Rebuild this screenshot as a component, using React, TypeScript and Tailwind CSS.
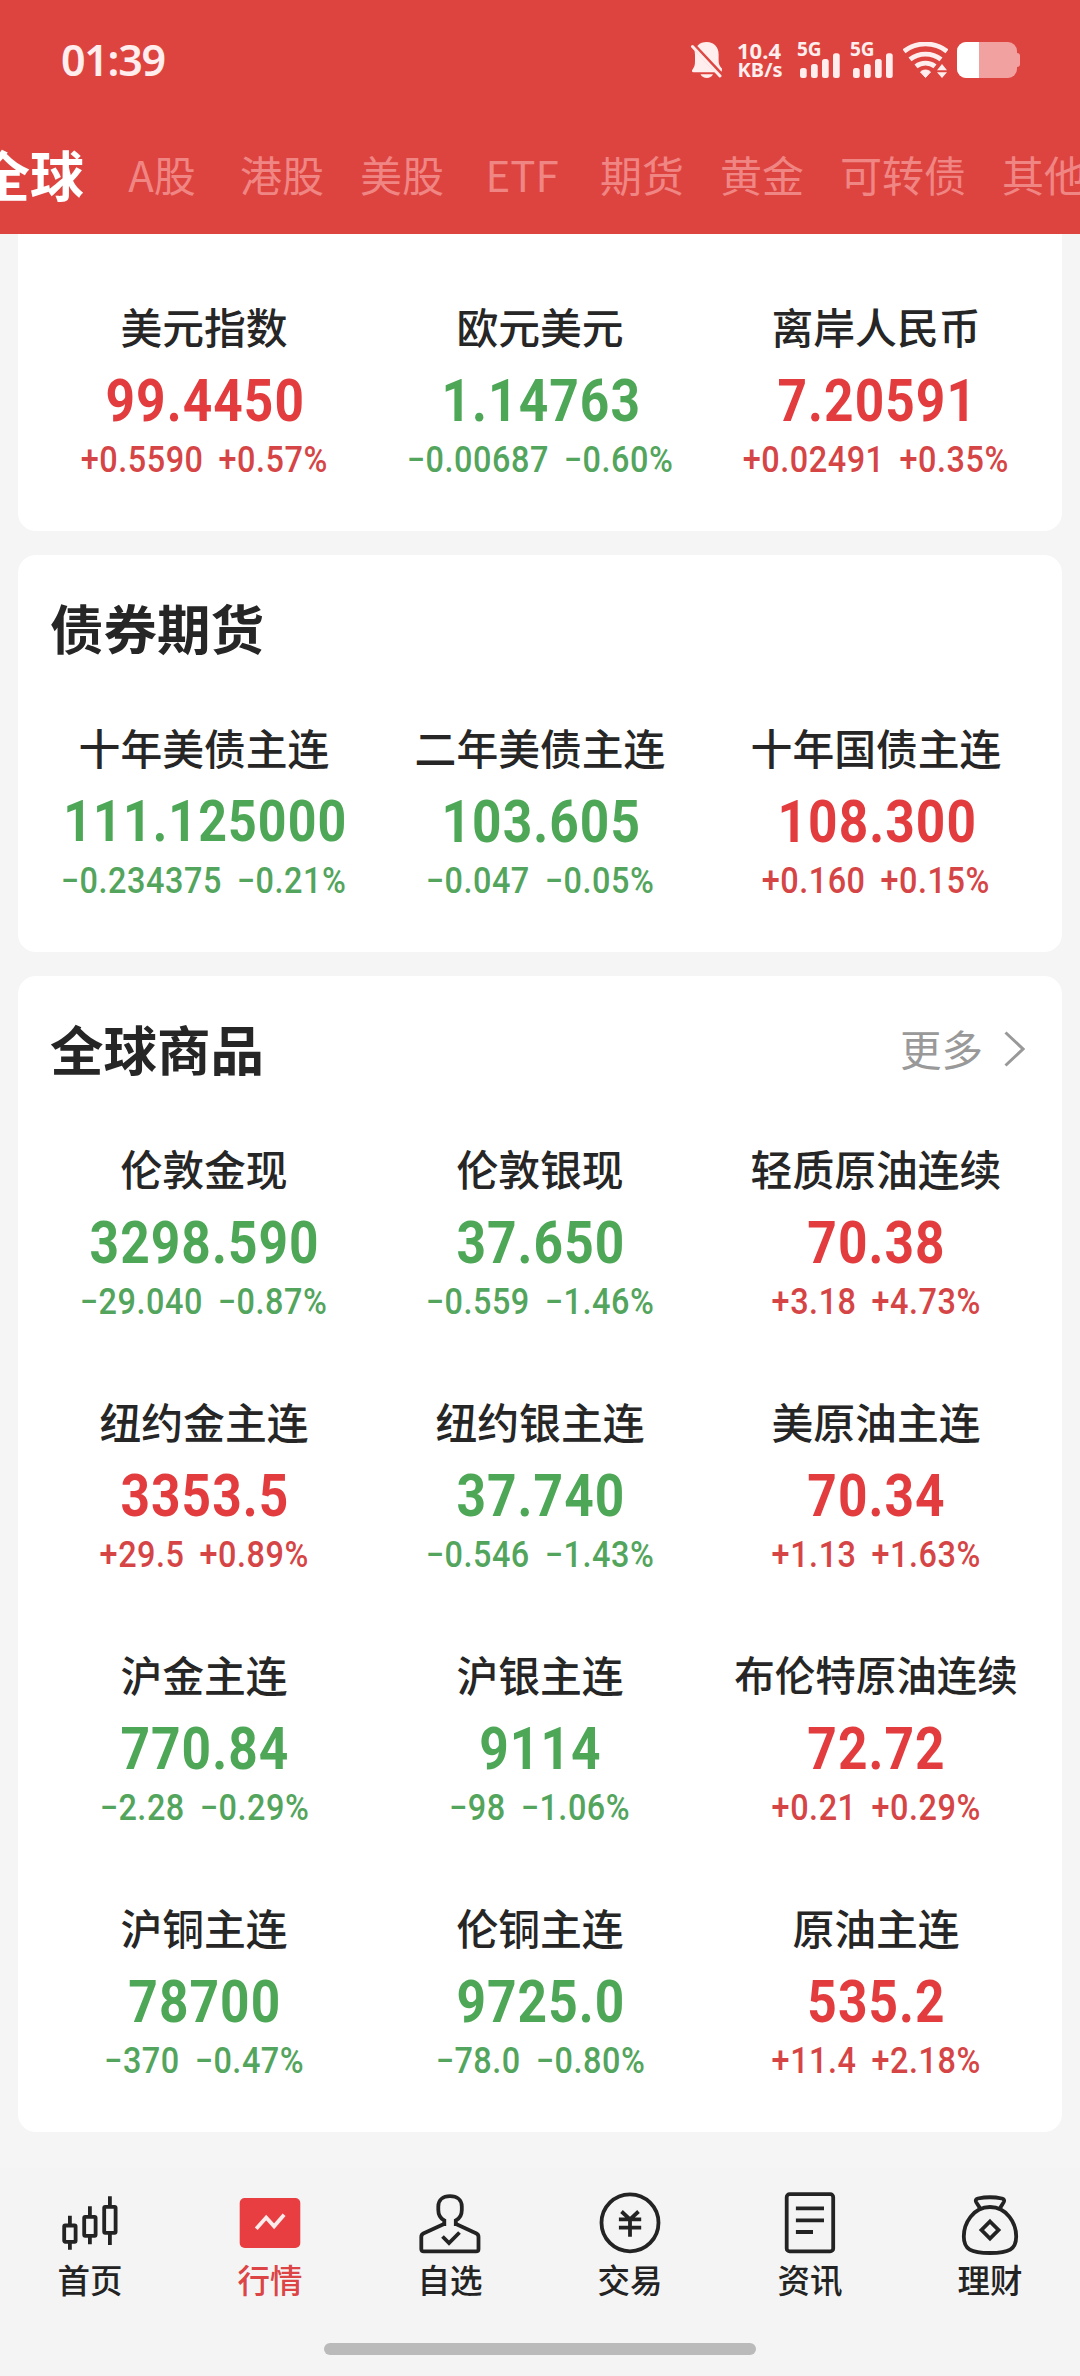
import React from 'react';

interface Quote {
  name: string;
  price: string;
  change: string;
  up?: boolean;
}

const forex: Quote[] = [
  { name: '美元指数', price: '99.4450', change: '+0.5590 +0.57%', up: true },
  { name: '欧元美元', price: '1.14763', change: '−0.00687 −0.60%' },
  { name: '离岸人民币', price: '7.20591', change: '+0.02491 +0.35%', up: true },
];

const bonds: Quote[] = [
  { name: '十年美债主连', price: '111.125000', change: '−0.234375 −0.21%' },
  { name: '二年美债主连', price: '103.605', change: '−0.047 −0.05%' },
  { name: '十年国债主连', price: '108.300', change: '+0.160 +0.15%', up: true },
];

const commodities: Quote[] = [
  { name: '伦敦金现', price: '3298.590', change: '−29.040 −0.87%' },
  { name: '伦敦银现', price: '37.650', change: '−0.559 −1.46%' },
  { name: '轻质原油连续', price: '70.38', change: '+3.18 +4.73%', up: true },
  { name: '纽约金主连', price: '3353.5', change: '+29.5 +0.89%', up: true },
  { name: '纽约银主连', price: '37.740', change: '−0.546 −1.43%' },
  { name: '美原油主连', price: '70.34', change: '+1.13 +1.63%', up: true },
  { name: '沪金主连', price: '770.84', change: '−2.28 −0.29%' },
  { name: '沪银主连', price: '9114', change: '−98 −1.06%' },
  { name: '布伦特原油连续', price: '72.72', change: '+0.21 +0.29%', up: true },
  { name: '沪铜主连', price: '78700', change: '−370 −0.47%' },
  { name: '伦铜主连', price: '9725.0', change: '−78.0 −0.80%' },
  { name: '原油主连', price: '535.2', change: '+11.4 +2.18%', up: true },
];

const tabs = ['A股', '港股', '美股', 'ETF', '期货', '黄金', '可转债', '其他'];

const Signal: React.FC = () => (
  <div className="relative w-11 h-9 ml-[9px] shrink-0">
    <span className="absolute left-0 -top-[3px] text-[19px] leading-[20px] font-bold">5G</span>
    <svg className="w-11 h-9" viewBox="0 0 44 36" fill="currentColor">
      <rect x="3" y="26" width="6.7" height="10" rx="2.5" />
      <rect x="14" y="22" width="6.7" height="14" rx="2.5" />
      <rect x="25" y="17" width="6.7" height="19" rx="2.5" />
      <rect x="36" y="11.3" width="6.7" height="24.7" rx="2.5" />
    </svg>
  </div>
);

const StatusBar: React.FC = () => (
  <div className="flex items-center justify-between h-[120px] pl-[61px] pr-[60px] text-[#ffeeed] font-['Noto_Sans',sans-serif]">
    <span className="text-[43px] leading-[60px] font-semibold tracking-[-1.3px]">01:39</span>
    <div className="flex items-center">
      <svg className="w-8 h-9 shrink-0" viewBox="0 0 32 36" fill="currentColor">
        <path d="M8 3.2C10 1 13 0 16.8 0 24 0 28.6 5 28.6 12v6.5c0 3.5 1 5.5 3.3 8v3H30L6.5 5Z" />
        <path d="M4.6 8.5 25 30.3H3.5c-1.7 0-2-1.6-1-2.8C4.5 25 5 22.5 5 19v-6c0-1.7-.4-3-.4-4.5Z" />
        <path d="M10.5 32.3H23c-1.2 2.5-3.5 3.7-6.2 3.7s-5-1.2-6.3-3.7Z" />
        <path d="M2.5 4.5 30 34" stroke="currentColor" strokeWidth="3" strokeLinecap="round" />
        <path d="M5.5 3.3 32 31.5" stroke="#dd4440" strokeWidth="1.6" />
      </svg>
      <div className="w-[46px] ml-[14px] mr-[6px] flex flex-col items-center font-bold">
        <span className="text-[22px] leading-[20px]">10.4</span>
        <span className="text-[20px] leading-[20px] pl-[2px]">KB/s</span>
      </div>
      <Signal />
      <Signal />
      <svg className="w-[45px] h-9 ml-[9px] shrink-0" viewBox="0 0 45 36" fill="none" stroke="currentColor" strokeWidth="4.8">
        <path d="M1 9.3C13.5-.5 31.500-.5 44 9.300" />
        <path d="M7 17.300c9-7 22-7 31 0" />
        <path d="M13 24.300c5.500-4.300 13.500-4.300 19 0" />
        <path d="M17.5 30c2.5-2.600 7.500-2.600 10 0l-5 5.500Z" fill="currentColor" strokeWidth="1" />
        <path d="M34 28.200 39 22l5 6.200ZM34 30.200h10L39 36Z" fill="currentColor" stroke="none" />
      </svg>
      <div className="flex items-center ml-[9px]">
        <div className="w-[60px] h-9 rounded-[9px] bg-[#f1a2a0] overflow-hidden">
          <div className="w-[22px] h-full bg-white"></div>
        </div>
        <div className="w-[3px] h-[14px] rounded-r-[3px] bg-[#f1a2a0]"></div>
      </div>
    </div>
  </div>
);

const QuoteCell: React.FC<{ quote: Quote }> = ({ quote }) => (
  <div className="h-[253px] pt-[19px] flex flex-col items-center whitespace-nowrap">
    <div
      className={`h-[61px] leading-[58px] font-medium text-[#262626] ${
        quote.name.length > 6 ? 'text-[40.5px]' : 'text-[41.8px]'
      }`}
    >
      {quote.name}
    </div>
    <div
      className={`h-[86px] leading-[86px] pl-[2px] font-['Roboto',sans-serif] font-bold scale-x-[0.88] ${
        quote.price.length > 9 ? 'text-[57px] tracking-[1.2px]' : 'text-[58.5px] tracking-[1.2px]'
      } ${quote.up ? 'text-[#e23c3e]' : 'text-[#4da757]'}`}
    >
      {quote.price}
    </div>
    <div
      className={`font-['Roboto',sans-serif] font-medium text-[36px] leading-8 tracking-[0.6px] [word-spacing:7px] scale-x-[0.9] ${
        quote.up ? 'text-[#d64546]' : 'text-[#53a55d]'
      }`}
    >
      {quote.change}
    </div>
  </div>
);

const QuoteGrid: React.FC<{ quotes: Quote[] }> = ({ quotes }) => (
  <div className="grid grid-cols-[repeat(3,336px)] justify-center">
    {quotes.map((quote) => (
      <QuoteCell key={quote.name} quote={quote} />
    ))}
  </div>
);

const CardHeader: React.FC<{ title: string; more?: boolean }> = ({ title, more }) => (
  <div className="h-[144px] pl-8 pr-[37px] flex items-center justify-between">
    <h2 className="text-[53.5px] leading-[70px] font-bold text-[#262626]">{title}</h2>
    {more && (
      <div className="flex items-center text-[41.5px] leading-[58px] text-[#999]">
        更多
        <svg className="w-[22px] h-9 ml-5 mt-[2px]" viewBox="0 0 22 36" fill="none" stroke="currentColor" strokeWidth="3">
          <path d="M2.5 1.5 20 18 2.5 34.5" />
        </svg>
      </div>
    )}
  </div>
);

const navItems = [
  {
    label: '首页',
    icon: (
      <>
        <rect x="6.2" y="34.5" width="11.4" height="16.3" rx="1" />
        <rect x="26.2" y="25.8" width="11.4" height="19" rx="1" />
        <rect x="46.2" y="15.8" width="11.4" height="26" rx="1" />
        <path d="M11.9 24.7v9M11.9 51v7.7M31.9 15.3v10M31.9 45v8.3M51.9 5.3v10M51.9 42v12" />
      </>
    ),
  },
  {
    label: '行情',
    active: true,
    icon: (
      <>
        <rect x="1.7" y="7" width="60.6" height="50" rx="5" fill="#e93e41" stroke="none" />
        <path d="M18.2 37.7 28.2 26.5 36.1 35.3 46.1 23.7" stroke="#fdeaea" />
      </>
    ),
  },
  {
    label: '自选',
    icon: (
      <>
        <path d="M26.3 35V29.5C22.5 27.5 20.3 24 20.3 19v-3.5C20.3 9 25 5.2 32 5.2s11.8 3.8 11.8 10.3V19c0 5-2.2 8.5-6 10.5V35" />
        <path d="M38 33 58.5 42.500q2 1 2 3.500V58q0 2.400-2.400 2.400H5.700q-2.400 0-2.400-2.400V46q0-2.500 2-3.500L26 33" />
        <path d="M24.500 45.500 31 52 41.500 41.500" />
      </>
    ),
  },
  {
    label: '交易',
    icon: (
      <>
        <circle cx="32" cy="31.8" r="28.5" />
        <path d="M23.5 20.5 32 28.5 40.5 20.5M20.9 28.3h22.3M20.9 36.7h22.3M32 28v17.700" />
      </>
    ),
  },
  {
    label: '资讯',
    icon: (
      <>
        <rect x="8.7" y="3.2" width="46.5" height="57.2" rx="3" />
        <path d="M17.9 17.3H46M17.9 29.3H46M17.9 41H35" />
      </>
    ),
  },
  {
    label: '理财',
    icon: (
      <>
        <path d="M22 17.5C21.5 15.5 18.5 12.5 17.9 10.5q-.6-2.300 2-3Q32 5 44 7.500q2.600.7 2 3C45.4 12.5 42.5 15.5 42 17.5" />
        <path d="M32 16C15 16 5.8 32.5 5.8 45.5 5.8 58.500 13 62 32 62s26.200-3.500 26.200-16.500C58.2 32.5 49 16 32 16Z" />
        <path d="M32 30.5 40.5 39 32 47.5 23.5 39Z" />
      </>
    ),
  },
];

const App: React.FC = () => {
  return (
    <div className="w-[1080px] h-[2376px] flex flex-col overflow-hidden bg-[#f5f5f5] font-['Noto_Sans_CJK_SC',sans-serif]">
      <header className="h-[234px] shrink-0 bg-[#dd4440] overflow-hidden">
        <StatusBar />
        {/* Pestañas del mercado, desplazadas hacia la izquierda */}
        <div className="h-[107px] -ml-6 flex items-center gap-9 whitespace-nowrap">
          <span className="text-[54px] leading-[70px] font-bold text-white shrink-0">全球</span>
          {tabs.map((tab) => (
            <span key={tab} className="min-w-[84px] shrink-0 text-center text-[42px] leading-[60px] text-[#f08684]">
              {tab}
            </span>
          ))}
        </div>
      </header>

      <main className="h-[1934px] shrink-0 px-[18px] flex flex-col gap-6">
        <section className="bg-white rounded-b-[18px] pt-11">
          <QuoteGrid quotes={forex} />
        </section>
        <section className="bg-white rounded-[18px]">
          <CardHeader title="债券期货" />
          <QuoteGrid quotes={bonds} />
        </section>
        <section className="bg-white rounded-[18px]">
          <CardHeader title="全球商品" more />
          <QuoteGrid quotes={commodities} />
        </section>
      </main>

      <nav className="flex-1 flex flex-col items-center bg-[#f4f4f4]">
        <div className="w-full h-[175px] pt-[23px] grid grid-cols-6">
          {navItems.map((item) => (
            <div
              key={item.label}
              className={`flex flex-col items-center font-medium ${item.active ? 'text-[#dc4446]' : 'text-[#232323]'}`}
            >
              <svg className="w-16 h-16" viewBox="0 0 64 64" fill="none" stroke="currentColor" strokeWidth="3.8">
                {item.icon}
              </svg>
              <span className="text-[32.5px] leading-[48px]">{item.label}</span>
            </div>
          ))}
        </div>
        <div className="w-[432px] h-3 rounded-full bg-[#bababa]"></div>
      </nav>
    </div>
  );
};

export default App;
